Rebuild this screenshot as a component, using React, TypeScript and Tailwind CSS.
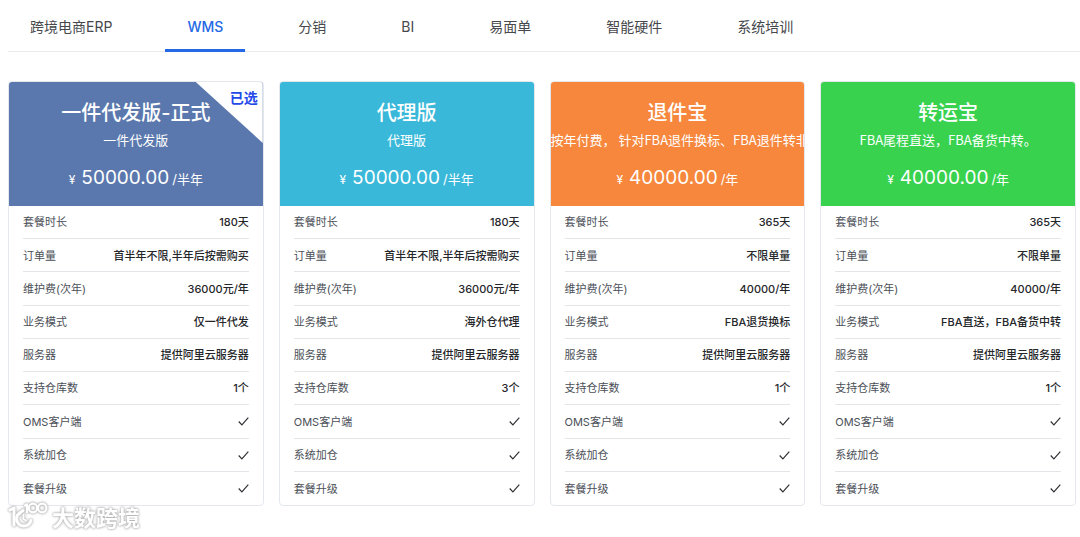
import React, { useState } from "react";

type Plan = {
  name: string;
  subtitle: string;
  price: string;
  unit: string;
  color: string;
  selected?: boolean;
  values: string[];
};

const tabs = ["跨境电商ERP", "WMS", "分销", "BI", "易面单", "智能硬件", "系统培训"];

const labels = ["套餐时长", "订单量", "维护费(次年)", "业务模式", "服务器", "支持仓库数"];
const features = ["OMS客户端", "系统加仓", "套餐升级"];

const plans: Plan[] = [
  {
    name: "一件代发版-正式",
    subtitle: "一件代发版",
    price: "50000.00",
    unit: "/半年",
    color: "bg-[#5a78ad]",
    selected: true,
    values: ["180天", "首半年不限,半年后按需购买", "36000元/年", "仅一件代发", "提供阿里云服务器", "1个"],
  },
  {
    name: "代理版",
    subtitle: "代理版",
    price: "50000.00",
    unit: "/半年",
    color: "bg-[#39b8d9]",
    values: ["180天", "首半年不限,半年后按需购买", "36000元/年", "海外仓代理", "提供阿里云服务器", "3个"],
  },
  {
    name: "退件宝",
    subtitle: "按年付费， 针对FBA退件换标、FBA退件转非亚",
    price: "40000.00",
    unit: "/年",
    color: "bg-[#f6873d]",
    values: ["365天", "不限单量", "40000/年", "FBA退货换标", "提供阿里云服务器", "1个"],
  },
  {
    name: "转运宝",
    subtitle: "FBA尾程直送，FBA备货中转。",
    price: "40000.00",
    unit: "/年",
    color: "bg-[#38d24f]",
    values: ["365天", "不限单量", "40000/年", "FBA直送，FBA备货中转", "提供阿里云服务器", "1个"],
  },
];

function Check() {
  return (
    <svg className="h-[11px] w-[11px]" viewBox="0 0 11 11" fill="none" stroke="#303236" strokeWidth="1.2" role="img" aria-label="支持">
      <path d="M0.7 5.5 3.9 8.9 10.3 1.6" />
    </svg>
  );
}

function PlanCard({ plan }: { plan: Plan }) {
  return (
    <section className="relative min-w-0 overflow-hidden rounded border border-[#e4e8ed] bg-white">
      <header className={`flex h-[124px] flex-col items-center text-white ${plan.color}`}>
        <h2 className="mt-[17px] text-[20px] leading-7 font-medium whitespace-nowrap">{plan.name}</h2>
        <div className="flex h-[26px] max-w-full items-center overflow-hidden text-[13px] whitespace-nowrap [font-family:'Noto_Sans_CJK_SC',sans-serif]">
          <p>{plan.subtitle}</p>
        </div>
        <p className="mt-[11px] flex items-baseline text-[13px] leading-7 whitespace-nowrap">
          <span className="mr-1.5 text-[12px]">¥</span>
          <span className="text-[19px]">{plan.price}</span>
          <span className="ml-[3px]">{plan.unit}</span>
        </p>
      </header>
      {plan.selected && (
        <div className="absolute top-0 right-0 h-[61px] w-[67px] bg-white [clip-path:polygon(0_0,100%_0,100%_100%)]">
          <span className="absolute top-[6px] right-[5px] text-[14px] leading-5 font-bold text-[#2448e8]">已选</span>
        </div>
      )}
      <dl className="grid h-[299px] grid-rows-9 px-3.5 text-[11px]">
        {labels.map((label, i) => (
          <div key={label} className="flex items-center justify-between border-b border-[#e3e5e8] pt-px whitespace-nowrap">
            <dt className="text-[#4b4f57]">{label}</dt>
            <dd className="font-medium text-[#242629]">{plan.values[i]}</dd>
          </div>
        ))}
        {features.map((label) => (
          <div key={label} className="flex items-center justify-between border-b border-[#e3e5e8] pt-px whitespace-nowrap last:border-b-0">
            <dt className="text-[#4b4f57]">{label}</dt>
            <dd>
              <Check />
            </dd>
          </div>
        ))}
      </dl>
    </section>
  );
}

function Watermark() {
  return (
    <div className="relative -mt-1 flex items-center gap-1 text-white [filter:drop-shadow(0_0_1px_#aaa)_drop-shadow(0_0_1px_#ccc)]">
      <svg className="h-8 w-10" viewBox="0 0 40 32" fill="none" stroke="currentColor" strokeWidth="3" strokeLinecap="round" strokeLinejoin="round" aria-hidden="true">
        <path d="M2 8 6 6v17" />
        <path d="M15 8.500 9.500 13C7 19 10.500 24 16 24c4 0 6-2.500 7-5.500" />
        <path d="M17 3.500 19 2.500V10" strokeWidth="2.400" />
        <path d="M15.500 13v4l2.500 1.500" strokeWidth="1.800" />
        <ellipse cx="25" cy="6" rx="4.200" ry="4.400" strokeWidth="2.200" />
        <ellipse cx="34.200" cy="6" rx="4.200" ry="4.400" strokeWidth="2.200" />
      </svg>
      <span className="text-[22px] leading-8 font-bold whitespace-nowrap">大数跨境</span>
    </div>
  );
}

export default function App() {
  const [active, setActive] = useState("WMS");
  return (
    <main className="bg-white pl-2 [font-family:Inter,'Noto_Sans_CJK_SC',sans-serif]">
      <nav className="flex h-[52px] gap-[31px] border-b border-[#e9eaec] text-[14px]">
        {tabs.map((tab) => (
          <button
            key={tab}
            type="button"
            onClick={() => setActive(tab)}
            className={
              tab === active
                ? "-mb-px border-b-3 border-[#2468e5] px-[22px] pt-[3px] font-medium whitespace-nowrap text-[#2468e5]"
                : "-mb-px border-b-3 border-transparent px-[22px] pt-[3px] whitespace-nowrap text-[#46484c]"
            }
          >
            {tab}
          </button>
        ))}
      </nav>
      <div className="mt-[29px] mr-1">
        <div className="grid grid-cols-4 gap-[15px]">
          {plans.map((plan) => (
            <PlanCard key={plan.name} plan={plan} />
          ))}
        </div>
        <Watermark />
      </div>
    </main>
  );
}
